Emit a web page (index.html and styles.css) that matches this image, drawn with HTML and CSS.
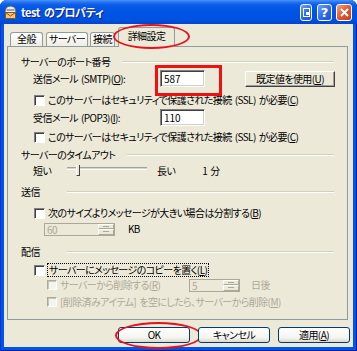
FILE: index.html
```html
<!DOCTYPE html>
<html lang="ja">
<head>
<meta charset="utf-8">
<title>test のプロパティ</title>
<link rel="stylesheet" href="styles.css">
</head>
<body>
<div class="window">
  <div class="titlebar">
    <svg class="app-icon" width="15" height="15" viewBox="0 0 15 15">
      <path d="M2 7.5 Q2 1 7.5 1 Q13 1 13 7.5 Z" fill="#EDEDED" stroke="#5A5A5A" stroke-width="1"/>
      <rect x="3.5" y="4" width="8" height="2" fill="#9AA3AE"/>
      <rect x="2.5" y="7.5" width="10" height="6" fill="#F6C770" stroke="#8A5418" stroke-width="1"/>
      <path d="M2.5 7.5 L7.5 11 L12.5 7.5" fill="none" stroke="#8A5418" stroke-width="1"/>
    </svg>
    <span class="title">test のプロパティ</span>
    <div class="tb-buttons">
      <span class="tb-btn tb-ime">
        <svg width="7" height="9" viewBox="0 0 7 9"><rect x="0.5" y="0.5" width="6" height="8" fill="none" stroke="#fff"/><rect x="3" y="4" width="3" height="3" fill="#fff"/></svg>
      </span>
      <span class="tb-btn tb-help">?</span>
      <span class="tb-btn tb-close">
        <svg width="9" height="9" viewBox="0 0 9 9"><path d="M1 1 L8 8 M8 1 L1 8" stroke="#fff" stroke-width="2"/></svg>
      </span>
    </div>
  </div>

  <div class="client">
    <div class="tabs">
      <div class="tab t1">全般</div>
      <div class="tab t2">サーバー</div>
      <div class="tab t3">接続</div>
      <div class="tab t4 active">詳細設定<span class="ring ring-tab"></span></div>
    </div>

    <div class="panel">
      <div class="rows">
        <div class="group-head"><span class="gh-label">サーバーのポート番号</span><i class="rule"></i></div>

        <div class="field-row">
          <span class="field-label">送信メール (SMTP)(<u>O</u>):</span>
          <span class="marked"><span class="textbox">587</span></span>
          <span class="btn classic">既定値を使用(<u>U</u>)</span>
        </div>

        <div class="check-row">
          <span class="check"></span>
          <span>このサーバーはセキュリティで保護された接続 (SSL) が必要(<u>C</u>)</span>
        </div>

        <div class="field-row">
          <span class="field-label">受信メール (POP3)(<u>I</u>):</span>
          <span class="textbox">110</span>
        </div>

        <div class="check-row">
          <span class="check"></span>
          <span>このサーバーはセキュリティで保護された接続 (SSL) が必要(<u>C</u>)</span>
        </div>

        <div class="group-head"><span class="gh-label">サーバーのタイムアウト</span><i class="rule"></i></div>

        <div class="slider-row">
          <span class="sl-short">短い</span>
          <span class="slider"><i class="track"></i><i class="thumb"></i></span>
          <span class="sl-long">長い</span>
          <span class="sl-value">1 分</span>
        </div>

        <div class="group-head"><span class="gh-label">送信</span><i class="rule"></i></div>

        <div class="check-row">
          <span class="check"></span>
          <span>次のサイズよりメッセージが大きい場合は分割する(<u>B</u>)</span>
        </div>

        <div class="spin-row">
          <span class="spin spin-kb"><span class="spin-val">60</span><span class="spin-btns"><i class="up"></i><i class="down"></i></span></span>
          <span class="unit-kb">KB</span>
        </div>

        <div class="group-head"><span class="gh-label">配信</span><i class="rule"></i></div>

        <div class="check-row">
          <span class="check"></span>
          <span class="focus">サーバーにメッセージのコピーを置く(<u>L</u>)</span>
        </div>

        <div class="sub-row">
          <span class="check disabled"></span>
          <span class="sub-label dim">サーバーから削除する(<u>R</u>)</span>
          <span class="spin spin-days"><span class="spin-val">5</span><span class="spin-btns"><i class="up"></i><i class="down"></i></span></span>
          <span class="unit-days dim">日後</span>
        </div>

        <div class="sub-row">
          <span class="check disabled"></span>
          <span class="dim">[削除済みアイテム] を空にしたら、サーバーから削除(<u>M</u>)</span>
        </div>
      </div>
    </div>

    <div class="actions">
      <span class="btn xp ok">OK<span class="ring ring-ok"></span></span>
      <span class="btn xp">キャンセル</span>
      <span class="btn xp">適用(<u>A</u>)</span>
    </div>
  </div>
</div>
</body>
</html>
```

FILE: styles.css
```css
* { box-sizing: border-box; margin: 0; padding: 0; }

html, body { background: #ffffff; }

body {
  margin: 0;
  font-family: "Noto Sans CJK JP", "Noto Sans", sans-serif;
  font-size: 10px;
  line-height: 12px;
  letter-spacing: -0.6px;
  word-spacing: 1.5px;
  color: #000;
  font-feature-settings: "palt";
}

u { text-decoration: underline; text-underline-offset: 1px; }

.window {
  width: 357px;
  height: 351px;
  display: flex;
  flex-direction: column;
  background: #0055E5;
  border-radius: 7px 7px 0 0;
  box-shadow: inset 1px 0 #0831D9, inset -1px 0 #001EA0, inset 0 -1px #001EA0;
}

/* ---------- title bar ---------- */
.titlebar {
  height: 24px;
  flex: none;
  display: flex;
  align-items: center;
  padding: 0 5px 0 3px;
  border-radius: 7px 7px 0 0;
  background: linear-gradient(to bottom, #4A95FA 0, #2A76F2 2px, #0A5CE8 5px, #0055E5 45%, #0052E0 80%, #0046CF 100%);
}

.app-icon { flex: none; }

.title {
  margin-left: 3px;
  color: #fff;
  font-weight: 700;
  font-size: 11px;
  line-height: 14px;
  letter-spacing: -0.4px;
  word-spacing: 2px;
  text-shadow: 1px 1px #0F1C89;
}

.tb-buttons {
  margin-left: auto;
  display: flex;
  align-items: center;
  gap: 4px;
}

.tb-btn {
  height: 17px;
  display: flex;
  align-items: center;
  justify-content: center;
  border: 1px solid #fff;
  border-radius: 3px;
  color: #fff;
  letter-spacing: 0;
  background: linear-gradient(135deg, #6AA2FB 0%, #2D6AEA 55%, #1C52D4 100%);
}

.tb-ime { width: 12px; margin-right: 1px; }
.tb-help { width: 15px; font: 700 13px/15px "DejaVu Sans", sans-serif; }
.tb-close {
  width: 16px;
  background: linear-gradient(135deg, #F2A088 0%, #E2582F 50%, #C3401E 100%);
}

/* ---------- client ---------- */
.client {
  flex: 1;
  margin: 0 4px 4px;
  background: #ECE9D8;
  display: flex;
  flex-direction: column;
  padding: 3px 5px 0 3px;
}

.tabs {
  display: flex;
  align-items: flex-end;
  height: 20px;
  margin-bottom: -1px;
  padding-left: 3px;
  gap: 3px;
}

.tab {
  position: relative;
  height: 14px;
  margin-bottom: 1px;
  border: 1px solid #919B9C;
  border-bottom: none;
  border-radius: 3px 3px 0 0;
  background: linear-gradient(#FFFFFF, #EEEDE6);
  text-align: center;
  line-height: 12px;
}

.t1 { width: 33px; }
.t2 { width: 42px; }
.t3 { width: 25px; margin-left: -1px; }
.t4 { width: 57px; }

.tab.active {
  height: 20px;
  margin-bottom: 0;
  z-index: 2;
  background: #ECE9D8;
  line-height: 16px;
}

.panel {
  height: 274px;
  border: 1px solid #919B9C;
  background: #ECE9D8;
}

.rows {
  display: grid;
  grid-template-rows: 15px 23px 16px 21px 18px 16px 21px 21px 16px 23px 18px 15px 17px auto;
  align-items: start;
  padding-top: 8px;
}

.group-head {
  height: 14px;
  display: flex;
  align-items: center;
  padding: 0 13px;
}

.gh-label { min-width: 34px; }

.rule {
  flex: 1;
  height: 2px;
  margin-left: 12px;
  border-top: 1px solid #D0D0BF;
  border-bottom: 1px solid #FFFFFF;
}

.field-row {
  height: 17px;
  display: flex;
  align-items: center;
  padding-left: 25px;
}

.field-label { width: 127px; }

.textbox {
  display: block;
  width: 45px;
  height: 17px;
  padding-left: 3px;
  line-height: 15px;
  letter-spacing: 0;
  background: #fff;
  border: 1px solid;
  border-color: #808080 #FFFFFF #FFFFFF #808080;
  box-shadow: inset 1px 1px #404040, inset -1px -1px #D4D0C8;
}

.marked { position: relative; display: block; }
.marked::after {
  content: "";
  position: absolute;
  left: -5px;
  top: -5px;
  width: 61px;
  height: 25px;
  border: 3px solid #EE1111;
}

.btn {
  display: flex;
  align-items: center;
  justify-content: center;
}

.classic {
  margin-left: 40px;
  width: 90px;
  height: 16px;
  background: #ECE9D8;
  border: 1px solid;
  border-color: #FFFFFF #404040 #404040 #FFFFFF;
  box-shadow: inset -1px -1px #A0A0A0;
}

.check-row {
  height: 14px;
  display: flex;
  align-items: center;
  gap: 3px;
  padding-left: 26px;
}

.check {
  flex: none;
  width: 11px;
  height: 11px;
  background: #fff;
  border: 1px solid;
  border-color: #808080 #FFFFFF #FFFFFF #808080;
  box-shadow: inset 1px 1px #404040;
}

.check.disabled {
  width: 10px;
  height: 10px;
  background: #F4F3EE;
  border-color: #ACA899 #FFFFFF #FFFFFF #ACA899;
  box-shadow: inset 1px 1px #C9C7BA;
}

.focus { outline: 1px dotted #000; outline-offset: 0; padding: 0 1px; }

.slider-row {
  height: 14px;
  display: flex;
  align-items: center;
  padding-left: 25px;
}

.sl-short { width: 34px; }

.slider {
  position: relative;
  width: 80px;
  height: 14px;
}

.track {
  position: absolute;
  left: 0;
  right: 0;
  top: 3px;
  height: 3px;
  border-top: 1px solid #A0A0A0;
  border-bottom: 1px solid #FFFFFF;
  background: #D8D4C4;
}

.thumb {
  position: absolute;
  left: 9px;
  top: 1px;
  width: 4px;
  height: 11px;
  background: #ECE9D8;
  border-left: 1px solid #FFFFFF;
  border-right: 1px solid #404040;
  border-bottom: 1px solid #404040;
}

.sl-long { margin-left: 10px; }
.sl-value { margin-left: 27px; }

.spin-row {
  height: 14px;
  display: flex;
  align-items: center;
  padding-left: 36px;
}

.spin {
  display: flex;
  height: 13px;
  border: 1px solid #ACA899;
  background: #ECE9D8;
}

.spin-kb { width: 71px; }
.spin-days { width: 51px; }

.spin-val {
  flex: 1;
  padding-left: 2px;
  line-height: 11px;
  color: #ACA899;
}

.spin-btns {
  width: 16px;
  display: flex;
  flex-direction: column;
}

.spin-btns i {
  flex: 1;
  position: relative;
  background: #ECE9D8;
  border: 1px solid;
  border-color: #FFFFFF #ACA899 #ACA899 #FFFFFF;
}

.spin-btns i::after {
  content: "";
  position: absolute;
  left: 4px;
  top: 1px;
  width: 6px;
  height: 1px;
  background: #ACA899;
}

.unit-kb { margin-left: 13px; }

.sub-row {
  height: 14px;
  display: flex;
  align-items: center;
  gap: 3px;
  padding-left: 39px;
}

.sub-label { width: 126px; }
.unit-days { margin-left: 8px; }

.dim { color: #ACA899; }

/* ---------- bottom buttons ---------- */
.actions {
  margin-top: 7px;
  display: flex;
  justify-content: flex-end;
  gap: 8px;
  margin-right: -2px;
}

.xp {
  position: relative;
  width: 72px;
  height: 16px;
  border: 1px solid #003C74;
  border-radius: 3px;
  background: linear-gradient(#FFFFFF 0%, #F4F4F0 70%, #DCD8CC 100%);
}

.ring {
  position: absolute;
  border: 2px solid #E8101A;
  border-radius: 50%;
  pointer-events: none;
}

.ring-tab {
  left: -6px;
  top: -4px;
  width: 77px;
  height: 25px;
}

.ring-ok {
  left: -4px;
  top: -6px;
  width: 87px;
  height: 27px;
}
```
